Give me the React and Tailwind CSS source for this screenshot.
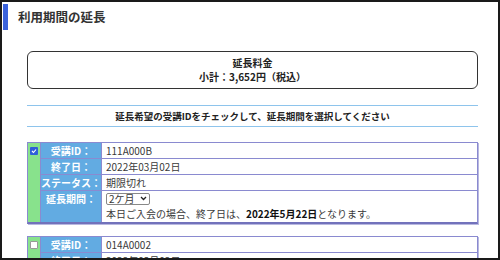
import React from 'react';

const font = { fontFamily: '"Noto Sans CJK JP", "Noto Sans", sans-serif' };

const Row = ({ label, children, last, tall }) => (
  <div className={`flex ${tall ? 'h-[31px]' : 'h-[16px]'} ${last ? '' : 'border-b border-[#8a8ad0]'}`}>
    <div className="w-[61px] shrink-0 bg-[#62abe2] text-white font-bold text-[10px] flex items-start justify-center border-r border-[#8a8ad0]">
      <span className="leading-[15px]">{label}</span>
    </div>
    <div className="flex-1 bg-white px-[4px] text-[10px] text-[#3a3a3a] leading-[15px]">{children}</div>
  </div>
);

const Card = ({ id, checked, extra }) => (
  <div className="flex border border-[#8a8ad0] border-b-2 border-b-[#7272bb] shadow-[1px_1px_0_#b8b8e0]">
    <div className="w-[13px] shrink-0 bg-[#88e28c] flex justify-center pt-[4px] border-r border-[#8a8ad0]">
      {checked ? (
        <div className="w-[8px] h-[8px] bg-[#2f5fd8] rounded-[1px] flex items-center justify-center">
          <svg width="6" height="6" viewBox="0 0 6 6">
            <path d="M1 3 L2.5 4.5 L5 1.5" stroke="white" strokeWidth="1.1" fill="none" />
          </svg>
        </div>
      ) : (
        <div className="w-[8px] h-[8px] bg-white border border-[#999] rounded-[1px]" />
      )}
    </div>
    <div className="flex-1 flex flex-col">
      <Row label="受講ID：">{id}</Row>
      <Row label="終了日：">2022年03月02日</Row>
      {extra}
    </div>
  </div>
);

export default function App() {
  return (
    <div className="w-[500px] h-[260px] overflow-hidden bg-white border-2 border-[#1a1a1a]" style={font}>
      <div className="flex items-center gap-[10px] pt-[2px] pl-[1px]">
        <div className="w-[5px] h-[26px] bg-[#3a62dc]" />
        <div className="text-[12.5px] font-bold text-[#333]">利用期間の延長</div>
      </div>
      <div className="pl-[25px] pr-[20px] pt-[21px]">
        <div className="border-[1.5px] border-[#333] rounded-[6px] h-[38px] flex flex-col items-center justify-center text-[10px] font-bold text-[#222] leading-[14px]">
          <div>延長料金</div>
          <div>小計：3,652円（税込）</div>
        </div>
        <div className="mt-[16px] border-t border-b border-[#8ec4ec] h-[22px] flex items-center justify-center text-[9.5px] font-bold text-[#222]">
          延長希望の受講IDをチェックして、延長期間を選択してください
        </div>
        <div className="mt-[15px]">
          <Card
            id="111A000B"
            checked
            extra={
              <>
                <Row label="ステータス：">期限切れ</Row>
                <Row label="延長期間：" last tall>
                  <div className="flex flex-col">
                    <div className="h-[15px] flex items-center">
                      <div className="flex items-center border border-[#888] rounded-[2px] h-[12px] px-[2px] text-[10px] leading-none gap-[5px]">
                        <span>2ケ月</span>
                        <svg width="7" height="5" viewBox="0 0 7 5">
                          <path d="M1 1 L3.5 3.5 L6 1" stroke="#222" strokeWidth="1.3" fill="none" />
                        </svg>
                      </div>
                    </div>
                    <div>
                      本日ご入会の場合、終了日は、<span className="font-bold text-[#111]">2022年5月22日</span>となります。
                    </div>
                  </div>
                </Row>
              </>
            }
          />
        </div>
        <div className="mt-[12px]">
          <Card id="014A0002" />
        </div>
      </div>
    </div>
  );
}
